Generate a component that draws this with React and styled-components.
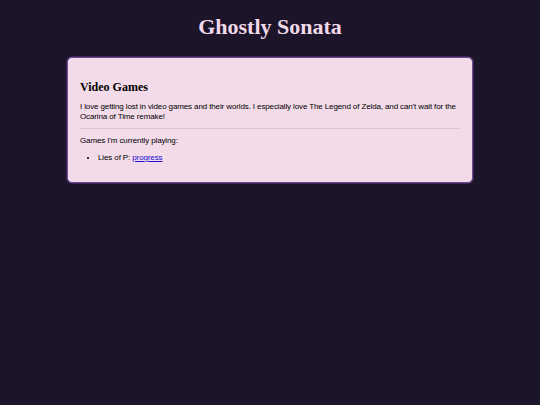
import React from "react";
import styled, { createGlobalStyle } from "styled-components";

const GlobalStyle = createGlobalStyle`
  html, body {
    margin: 0;
    padding: 0;
    background: #1c1429;
  }
  body {
    font-family: "Liberation Sans", Arial, sans-serif;
  }
`;

const Page = styled.div`
  min-height: 405px;
  padding-top: 12px;
  box-sizing: border-box;
`;

const Title = styled.h1`
  margin: 0 0 15px;
  text-align: center;
  font-family: "Liberation Serif", "Times New Roman", serif;
  font-weight: 700;
  font-size: 22px;
  line-height: 30px;
  color: #f1d9ea;
`;

const Card = styled.section`
  width: 406px;
  margin: 0 auto;
  box-sizing: border-box;
  background: #f3dbe9;
  border: 1px solid #6d4a93;
  box-shadow: 0 0 0 1px #3a2656;
  border-radius: 5px;
  padding: 20px 12px 19px;
  color: #000;
`;

const Heading = styled.h2`
  margin: 0 0 6px;
  font-family: "Liberation Serif", "Times New Roman", serif;
  font-weight: 700;
  font-size: 12px;
  line-height: 18px;
`;

const Text = styled.p`
  margin: 0;
  font-size: 8px;
  line-height: 10px;
  letter-spacing: -0.12px;
`;

const Rule = styled.hr`
  border: none;
  height: 1px;
  background: #dbc3d1;
  margin: 6px 0 7px;
`;

const List = styled.ul`
  margin: 7px 0 0;
  padding-left: 18px;
  font-size: 8px;
  line-height: 10px;
  letter-spacing: -0.12px;
`;

const Link = styled.a`
  color: #1a0dd6;
  text-decoration: underline;
`;

export default function App() {
  return (
    <>
      <GlobalStyle />
      <Page>
        <Title>Ghostly Sonata</Title>
        <Card>
          <Heading>Video Games</Heading>
          <Text>
            I love getting lost in video games and their worlds. I especially love The Legend of
            Zelda, and can't wait for the Ocarina of Time remake!
          </Text>
          <Rule />
          <Text>Games I'm currently playing:</Text>
          <List>
            <li>
              Lies of P: <Link href="#">progress</Link>
            </li>
          </List>
        </Card>
      </Page>
    </>
  );
}
